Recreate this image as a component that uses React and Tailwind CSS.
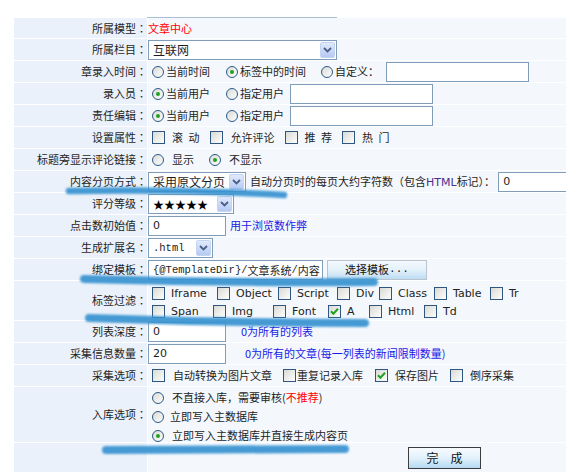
import React from "react";

// Windows-XP style form controls drawn as small SVGs
function Radio({ checked = false, className = "" }) {
  return (
    <svg width="12" height="12" viewBox="0 0 12 12" className={`flex-none ${className}`}>
      <circle cx="6" cy="6" r="5.5" fill="url(#ctlFill)" stroke="#2b5a89" />
      {checked && <circle cx="6" cy="6" r="2" fill="#21a121" />}
    </svg>
  );
}

function Check({ checked = false, className = "" }) {
  return (
    <svg width="13" height="13" viewBox="0 0 13 13" className={`flex-none ${className}`}>
      <rect x="0.5" y="0.5" width="12" height="12" fill="url(#ctlFill)" stroke="#2f5680" />
      {checked && (
        <path d="M3 6.2l2.4 2.5L10 3.8" fill="none" stroke="#21a121" strokeWidth="2" />
      )}
    </svg>
  );
}

function Select({ w, children, textClass = "" }) {
  return (
    <div className={`flex h-[20px] flex-none items-center border border-[#7f9db9] bg-white ${w}`}>
      <div
        className={`min-w-0 flex-1 overflow-hidden whitespace-nowrap pl-[4px] leading-[18px] ${textClass}`}
      >
        {children}
      </div>
      <div className="mr-px flex h-[16px] w-[15px] flex-none items-center justify-center rounded-[2px] border border-[#c4d4f3] bg-linear-to-b from-[#e0eafc] to-[#b5c9f3]">
        <svg width="9" height="6" viewBox="0 0 9 6">
          <path d="M1 1l3.5 3.5L8 1" fill="none" stroke="#4b5f85" strokeWidth="1.8" />
        </svg>
      </div>
    </div>
  );
}

function Input({ w, children, className = "" }) {
  return (
    <div
      className={`flex h-[20px] flex-none items-center overflow-hidden whitespace-nowrap border border-[#7f9db9] bg-white pl-[4px] leading-[18px] ${w} ${className}`}
    >
      {children}
    </div>
  );
}

function Row({ label, h, children, className = "" }) {
  return (
    <>
      <div className={`flex items-center justify-end bg-[#eaf1fa] ${h}`}>
        {label}
        {label && <span className="font-['Noto_Sans_CJK_JP',sans-serif]">：</span>}
      </div>
      <div className={`flex items-center whitespace-nowrap bg-[#f4f8fd] ${h} ${className}`}>
        {children}
      </div>
    </>
  );
}

const LAT = "font-['DejaVu_Sans',sans-serif]";
const MONO = "font-['Liberation_Mono',monospace]";

const tagLine1 = [
  ["Iframe", "w-[65px]", false],
  ["Object", "w-[61px]", false],
  ["Script", "w-[59px]", false],
  ["Div", "w-[42px]", false],
  ["Class", "w-[55px]", false],
  ["Table", "w-[56px]", false],
  ["Tr", "", false],
];
const tagLine2 = [
  ["Span", "w-[61px]", false],
  ["Img", "w-[60px]", false],
  ["Font", "w-[55px]", false],
  ["A", "w-[41px]", true],
  ["Html", "w-[55px]", false],
  ["Td", "", false],
];

function TagLine({ items }) {
  return (
    <div className="flex h-[18px] items-center pl-[4px]">
      {items.map(([name, w, on]) => (
        <div key={name} className={`flex flex-none items-center ${w}`}>
          <Check checked={on} />
          <span className={`ml-[6px] text-[11px] text-[#222] ${LAT}`}>{name}</span>
        </div>
      ))}
    </div>
  );
}

export default function App() {
  return (
    <div className="relative h-[472px] w-[566px] overflow-hidden bg-white text-[11px] leading-none text-[#1e1e1e] font-['Noto_Sans_CJK_SC',sans-serif]">
      <svg width="0" height="0" className="absolute">
        <defs>
          <linearGradient id="ctlFill" x1="0" y1="0" x2="1" y2="1">
            <stop offset="0" stopColor="#d8d8d2" />
            <stop offset="1" stopColor="#ffffff" />
          </linearGradient>
        </defs>
      </svg>

      <div className="flex h-[18px] items-end">
        <div className="ml-[147px] h-px w-[190px] bg-[#a9bfd6]" />
      </div>

      <div className="ml-[14px] grid w-[620px] grid-cols-[133px_1fr] gap-px bg-white">
        <Row label="所属模型" h="h-[20px]">
          <span className="text-[#ff0000]">文章中心</span>
        </Row>

        <Row label="所属栏目" h="h-[21px]">
          <Select w="w-[189px]" textClass="text-[12px]">互联网</Select>
        </Row>

        <Row label="章录入时间" h="h-[21px]">
          <Radio className="ml-[4px]" />
          <span className="ml-[2px]">当前时间</span>
          <Radio checked className="ml-[16px]" />
          <span className="ml-[2px]">标签中的时间</span>
          <Radio className="ml-[15px]" />
          <span className="ml-[2px]">自定义：</span>
          <Input w="w-[143px]" className="ml-[7px]" />
        </Row>

        <Row label="录入员" h="h-[21px]">
          <Radio checked className="ml-[4px]" />
          <span className="ml-[2px]">当前用户</span>
          <Radio className="ml-[16px]" />
          <span className="ml-[2px]">指定用户</span>
          <Input w="w-[143px]" className="ml-[6px]" />
        </Row>

        <Row label="责任编辑" h="h-[21px]">
          <Radio checked className="ml-[4px]" />
          <span className="ml-[2px]">当前用户</span>
          <Radio className="ml-[16px]" />
          <span className="ml-[2px]">指定用户</span>
          <Input w="w-[143px]" className="ml-[6px]" />
        </Row>

        <Row label="设置属性" h="h-[21px]">
          <Check className="ml-[4px]" />
          <span className="ml-[7px]">滚{"\u2002"}动</span>
          <Check className="ml-[10px]" />
          <span className="ml-[8px]">允许评论</span>
          <Check className="ml-[10px]" />
          <span className="ml-[7px]">推{"\u2002"}荐</span>
          <Check className="ml-[10px]" />
          <span className="ml-[7px]">热{"\u2002"}门</span>
        </Row>

        <Row label="标题旁显示评论链接" h="h-[21px]">
          <Radio className="ml-[4px]" />
          <span className="ml-[8px]">显示</span>
          <Radio checked className="ml-[15px]" />
          <span className="ml-[8px]">不显示</span>
        </Row>

        <Row label="内容分页方式" h="h-[21px]">
          <Select w="w-[98px]" textClass="text-[12px]">采用原文分页</Select>
          <span className="ml-[4px]">
            自动分页时的每页大约字符数（包含
            <span className={`text-[#4a2f8f] ${LAT}`}>HTML</span>
            标记）：
          </span>
          <Input w="w-[100px]" className={`ml-[3px] ${LAT}`}>
            0
          </Input>
        </Row>

        <Row label="评分等级" h="h-[21px]">
          <Select w="w-[86px]" textClass="text-[11px] text-black">
            ★★★★★
          </Select>
        </Row>

        <Row label="点击数初始值" h="h-[21px]">
          <Input w="w-[78px]" className={LAT}>
            0
          </Input>
          <span className="ml-[4px] text-[#1a1ae6]">用于浏览数作弊</span>
        </Row>

        <Row label="生成扩展名" h="h-[21px]">
          <Select w="w-[65px]" textClass={`text-[10.5px] ${MONO}`}>
            .html
          </Select>
        </Row>

        <Row label="绑定模板" h="h-[21px]">
          <Input w="w-[175px]">
            <span className={`text-[10.5px] ${MONO}`}>{"{@TemplateDir}/"}</span>
            <span>文章系统</span>
            <span className={`text-[10.5px] ${MONO}`}>/</span>
            <span>内容</span>
          </Input>
          <div className="ml-[4px] flex h-[20px] w-[100px] flex-none items-center justify-center border border-[#bac4ce] bg-linear-to-b from-[#f4f9fd] via-[#e4f1fa] to-[#bcdcf3] text-[#111]">
            选择模板<span className={`text-[11px] ${MONO}`}>...</span>
          </div>
        </Row>

        <Row label="标签过滤" h="h-[39px]" className="flex-col !items-start pt-[3px]">
          <TagLine items={tagLine1} />
          <TagLine items={tagLine2} />
        </Row>

        <Row label="列表深度" h="h-[21px]">
          <Input w="w-[78px]" className={LAT}>
            0
          </Input>
          <span className="ml-[15px] text-[#1a1ae6]">0为所有的列表</span>
        </Row>

        <Row label="采集信息数量" h="h-[21px]">
          <Input w="w-[78px]" className={LAT}>
            20
          </Input>
          <span className="ml-[19px] text-[#1a1ae6]">0为所有的文章(每一列表的新闻限制数量)</span>
        </Row>

        <Row label="采集选项" h="h-[21px]">
          <Check className="ml-[4px]" />
          <span className="ml-[8px]">自动转换为图片文章</span>
          <Check className="ml-[11px]" />
          <span className="ml-[1px]">重复记录入库</span>
          <Check checked className="ml-[12px]" />
          <span className="ml-[7px]">保存图片</span>
          <Check className="ml-[11px]" />
          <span className="ml-[7px]">倒序采集</span>
        </Row>

        <Row label="入库选项" h="h-[55px]" className="flex-col !items-start overflow-hidden pt-px">
          <div className="flex h-[19px] flex-none items-center">
            <Radio className="ml-[4px]" />
            <span className="ml-[8px]">
              不直接入库，需要审核(<span className="text-[#ff0000]">不推荐</span>)
            </span>
          </div>
          <div className="flex h-[19px] flex-none items-center">
            <Radio className="ml-[4px]" />
            <span className="ml-[6px]">立即写入主数据库</span>
          </div>
          <div className="flex h-[19px] flex-none items-center">
            <Radio checked className="ml-[4px]" />
            <span className="ml-[8px]">立即写入主数据库并直接生成内容页</span>
          </div>
        </Row>

        <Row label="" h="h-[40px]" className="!items-start pt-[4px]">
          <div className="ml-[260px] flex h-[22px] w-[73px] items-center justify-center border border-[#3d3d3d] bg-linear-to-b from-[#f7fbfe] via-[#e3f1fb] to-[#b4d9f2] text-[12px] text-[#111]">
            完{"\u3000"}成
          </div>
        </Row>
      </div>

      {/* marker strokes over the form */}
      <svg
        className="pointer-events-none absolute left-0 top-0"
        width="566"
        height="472"
        viewBox="0 0 566 472"
      >
        <defs>
          <filter id="soft" x="-10%" y="-200%" width="120%" height="500%">
            <feGaussianBlur stdDeviation="1.1" />
          </filter>
        </defs>
        <g filter="url(#soft)" fill="none" strokeLinecap="round" stroke="#3892d0" strokeOpacity="0.92">
          <path d="M69 191 Q180 189 284 195" strokeWidth="6.5" />
          <path d="M84 279 Q230 283 374 282" strokeWidth="8" />
          <path d="M89 318 Q230 323 365 323" strokeWidth="8" />
          <path d="M106 450 Q230 449 345 449" strokeWidth="8" />
        </g>
      </svg>
    </div>
  );
}
